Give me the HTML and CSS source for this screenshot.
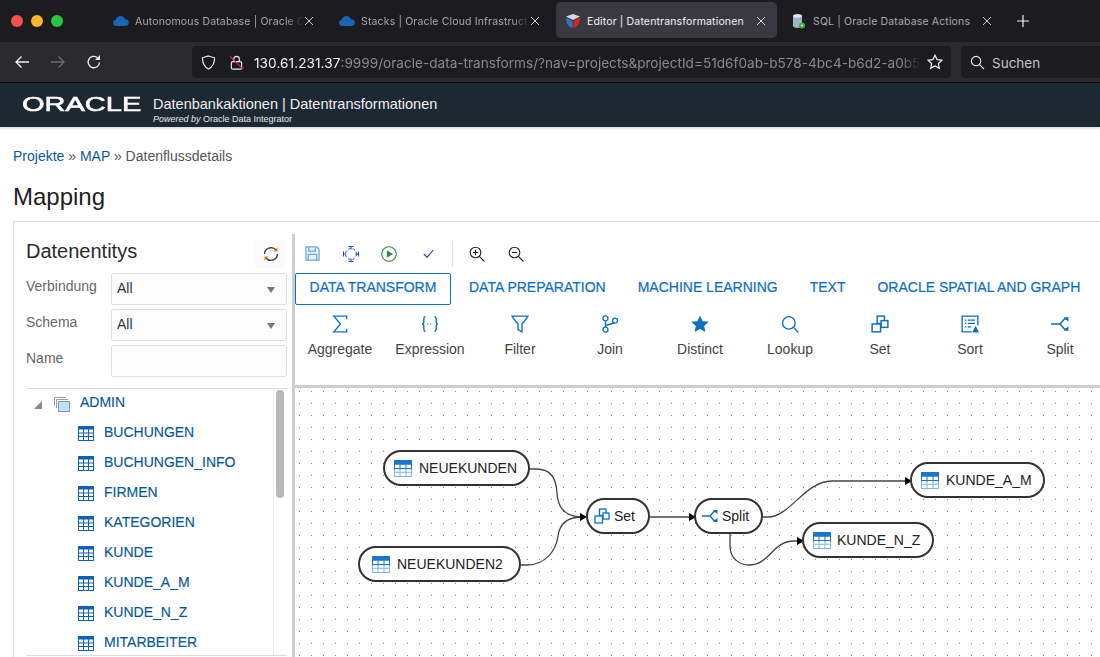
FILE: index.html
```html
<!DOCTYPE html>
<html lang="en">
<head>
  <meta charset="UTF-8">
  <meta name="viewport" content="width=device-width, initial-scale=1.0">
  <title>Editor | Datentransformationen</title>
  <link rel="stylesheet" href="styles.css">
</head>
<body>
  <svg class="defs" width="0" height="0">
    <defs>
      <symbol id="cloud" viewBox="0 0 16 10">
        <path d="M3.6 10C1.6 10 0 8.7 0 6.9 0 5.4 1.1 4.2 2.6 4 3.3 1.6 5.2 0 7.5 0c2.2 0 4 1.3 4.7 3.300C14.400 3.400 16 4.900 16 6.800 16 8.700 14.400 10 12.500 10z" fill="#1a65b5"/>
      </symbol>
      <symbol id="close" viewBox="0 0 10 10">
        <path d="M1 1L9 9M9 1L1 9" fill="none" stroke="#e6e6e8" stroke-width="0.900"/>
      </symbol>
      <symbol id="table" viewBox="0 0 16 15">
        <rect x="0.500" y="0.500" width="15" height="14" fill="#fff" stroke="#0d62b8"/>
        <rect x="0" y="0" width="16" height="3.500" fill="#0d62b8"/>
        <path d="M0.500 7H15.500M0.500 10.500H15.500M5.500 3V14.500M10.500 3V14.500" fill="none" stroke="#0d62b8"/>
      </symbol>
      <symbol id="table-soft" viewBox="0 0 18 16" preserveAspectRatio="none">
        <rect x="0" y="0" width="18" height="16" fill="#1a76cc"/>
        <rect x="0" y="9" width="18" height="7" fill="#7fb5e6"/>
        <path d="M1 4.500H5.500V7.500H1zM6.500 4.500H11.500V7.500H6.500zM12.500 4.500H17V7.500H12.500zM1 8.500H5.500V11H1zM6.500 8.500H11.500V11H6.500zM12.500 8.500H17V11H12.500zM1 12H5.500V15H1zM6.500 12H11.500V15H6.500zM12.500 12H17V15H12.500z" fill="#fff"/>
      </symbol>
      <symbol id="set" viewBox="0 0 16 16">
        <rect x="5.500" y="1" width="6.500" height="6.500" fill="#fff" stroke="#0b6fc4" stroke-width="1.300"/>
        <rect x="9" y="5" width="6" height="6" fill="#fff" stroke="#0b6fc4" stroke-width="1.300"/>
        <rect x="1" y="8" width="7.500" height="7" fill="#fff" stroke="#0b6fc4" stroke-width="1.300"/>
      </symbol>
      <symbol id="split" viewBox="0 0 16 14">
        <path d="M0 7H8M8 7L12 2.500H15M8 7L12 11.500H15" fill="none" stroke="#0b6fc4" stroke-width="1.400"/>
        <path d="M11 1H15.500V5zM11 13H15.500V9z" fill="#0b6fc4"/>
      </symbol>
    </defs>
  </svg>

  <!-- browser chrome -->
  <div class="tabstrip">
    <div class="traffic">
      <span class="light light-red"></span>
      <span class="light light-yellow"></span>
      <span class="light light-green"></span>
    </div>
    <div class="tabs">
      <div class="tab">
        <svg class="favicon" viewBox="0 0 16 16"><use href="#cloud" y="3" width="16" height="10"/></svg>
        <span class="tab-title">Autonomous Database | Oracle C</span>
        <svg class="tab-close"><use href="#close"/></svg>
      </div>
      <div class="tab">
        <svg class="favicon" viewBox="0 0 16 16"><use href="#cloud" y="3" width="16" height="10"/></svg>
        <span class="tab-title">Stacks | Oracle Cloud Infrastruct</span>
        <svg class="tab-close"><use href="#close"/></svg>
      </div>
      <div class="tab tab-active">
        <svg class="favicon" viewBox="0 0 16 16">
          <path d="M8 1L15 3.500 8 7 1 3.500z" fill="#d8d8d8"/>
          <path d="M1 4.500L7.500 8V15C4 14 1 11 1 4.500z" fill="#2c76c9"/>
          <path d="M15 4.500L8.500 8V15C12 14 15 11 15 4.500z" fill="#d9261c"/>
        </svg>
        <span class="tab-title">Editor | Datentransformationen</span>
        <svg class="tab-close"><use href="#close"/></svg>
      </div>
      <div class="tab">
        <svg class="favicon" viewBox="0 0 16 16">
          <path d="M2 3C2 0.500 11 0.500 11 3V13C11 15.500 2 15.500 2 13z" fill="#9db4cc"/>
          <ellipse cx="6.500" cy="3" rx="4.500" ry="1.800" fill="#dbe5ef"/>
          <circle cx="11" cy="12.500" r="3" fill="#3fae3a"/>
          <circle cx="11" cy="12.500" r="1" fill="#d5f5d0"/>
        </svg>
        <span class="tab-title">SQL | Oracle Database Actions</span>
        <svg class="tab-close"><use href="#close"/></svg>
      </div>
    </div>
    <svg class="new-tab" viewBox="0 0 12 12"><path d="M6 0V12M0 6H12" stroke="#f2f2f2" stroke-width="1.200"/></svg>
  </div>

  <div class="navbar">
    <svg class="nav-icon nav-back" viewBox="0 0 16 16"><path d="M15 8H2M7.500 2.500L2 8l5.500 5.500" fill="none" stroke="#f0f0f0" stroke-width="1.300"/></svg>
    <svg class="nav-icon nav-forward" viewBox="0 0 16 16"><path d="M1 8H14M8.500 2.500L14 8l-5.500 5.500" fill="none" stroke="#6c6c70" stroke-width="1.300"/></svg>
    <svg class="nav-icon nav-reload" viewBox="0 0 16 16"><path d="M13.500 8.500A5.700 5.700 0 1 1 11.500 3.700" fill="none" stroke="#f0f0f0" stroke-width="1.300"/><path d="M14 1V6H9z" fill="#f0f0f0"/></svg>
    <div class="urlbar">
      <svg class="url-icon" viewBox="0 0 16 16"><path d="M8 1L14.500 3C14.500 9 13 12.500 8 15 3 12.500 1.500 9 1.500 3z" fill="none" stroke="#f0f0f0" stroke-width="1.200"/></svg>
      <svg class="url-icon url-lock" viewBox="0 0 16 16">
        <rect x="2.500" y="7" width="11" height="8" rx="1.500" fill="none" stroke="#f0f0f0" stroke-width="1.200"/>
        <path d="M5 7V4.500a3 3 0 0 1 6 0V7" fill="none" stroke="#f0f0f0" stroke-width="1.200"/>
        <path d="M1 1.500L15 15" stroke="#e22850" stroke-width="1.200"/>
      </svg>
      <span class="url-text"><span class="url-host">130.61.231.37</span>:9999/oracle-data-transforms/?nav=projects&amp;projectId=51d6f0ab-b578-4bc4-b6d2-a0b5</span>
      <svg class="url-star" viewBox="0 0 16 16"><path d="M8 1.200l2.100 4.400 4.800.6-3.500 3.300.9 4.800L8 12l-4.300 2.300.9-4.800L1.100 6.200l4.800-.6z" fill="none" stroke="#f0f0f0" stroke-width="1.200"/></svg>
    </div>
    <div class="searchbar">
      <svg class="url-icon" viewBox="0 0 16 16"><circle cx="6.500" cy="6.500" r="5" fill="none" stroke="#f0f0f0" stroke-width="1.200"/><path d="M10.200 10.200L15 15" stroke="#f0f0f0" stroke-width="1.200"/></svg>
      <span class="search-text">Suchen</span>
    </div>
  </div>

  <!-- app header -->
  <header class="app-header">
    <div class="brand-logo"><span class="brand-word">ORACLE</span></div>
    <div class="brand-text">
      <div class="brand-title">Datenbankaktionen | Datentransformationen</div>
      <div class="brand-sub"><em>Powered by</em> Oracle Data Integrator</div>
    </div>
  </header>

  <main class="page">
    <div class="breadcrumb">
      <a>Projekte</a> <span class="sep">&raquo;</span> <a>MAP</a> <span class="sep">&raquo;</span> Datenflussdetails
    </div>
    <h1>Mapping</h1>

    <div class="workspace">
      <aside class="entities">
        <div class="entities-head">
          <h2>Datenentitys</h2>
          <button class="refresh-btn">
            <svg viewBox="0 0 16 16" width="16" height="16">
              <path d="M1.500 8A6.500 6.500 0 0 1 13 4" fill="none" stroke="#333" stroke-width="1.300"/>
              <path d="M14.500 8A6.500 6.500 0 0 1 3 12" fill="none" stroke="#333" stroke-width="1.300"/>
              <path d="M14.500 1.500V5.500H10.500z" fill="#d9791a"/>
              <path d="M1.500 14.500V10.500H5.500z" fill="#d9791a"/>
            </svg>
          </button>
        </div>
        <div class="field">
          <label>Verbindung</label>
          <div class="select">All<span class="caret"></span></div>
        </div>
        <div class="field">
          <label>Schema</label>
          <div class="select">All<span class="caret"></span></div>
        </div>
        <div class="field">
          <label>Name</label>
          <div class="select"></div>
        </div>
        <div class="tree">
          <div class="tree-list">
            <div class="tree-row tree-root">
              <span class="tree-toggle"></span>
              <svg class="folder-icon" viewBox="0 0 16 15">
                <path d="M0.500 9V0.500H12M2.500 11V2.500H14" fill="none" stroke="#8fa3ad"/>
                <rect x="4.500" y="4.500" width="11" height="10" fill="#bfe3f5" stroke="#7f98a6"/>
              </svg>
              <span>ADMIN</span>
            </div>
            <div class="tree-row"><svg class="table-icon"><use href="#table"/></svg><span>BUCHUNGEN</span></div>
            <div class="tree-row"><svg class="table-icon"><use href="#table"/></svg><span>BUCHUNGEN_INFO</span></div>
            <div class="tree-row"><svg class="table-icon"><use href="#table"/></svg><span>FIRMEN</span></div>
            <div class="tree-row"><svg class="table-icon"><use href="#table"/></svg><span>KATEGORIEN</span></div>
            <div class="tree-row"><svg class="table-icon"><use href="#table"/></svg><span>KUNDE</span></div>
            <div class="tree-row"><svg class="table-icon"><use href="#table"/></svg><span>KUNDE_A_M</span></div>
            <div class="tree-row"><svg class="table-icon"><use href="#table"/></svg><span>KUNDE_N_Z</span></div>
            <div class="tree-row"><svg class="table-icon"><use href="#table"/></svg><span>MITARBEITER</span></div>
          </div>
          <div class="tree-scroll"><div class="tree-thumb"></div></div>
        </div>
      </aside>

      <section class="editor">
        <div class="editor-tools">
          <svg class="tool" viewBox="0 0 16 16">
            <path d="M1 1H12.500L15 3.500V15H1z" fill="#eaf3fb" stroke="#6aa6da" stroke-width="1.300"/>
            <path d="M4 1.500V5.500H11V1.500M3.500 15V9H12.500V15" fill="none" stroke="#6aa6da" stroke-width="1.300"/>
          </svg>
          <svg class="tool tool-fit" viewBox="0 0 16 16">
            <circle cx="8" cy="8" r="5.500" fill="none" stroke="#1a3fe0" stroke-dasharray="2.500 2"/>
            <path d="M5.500 0.500H10.500M8 0.500V3.500M5.500 15.500H10.500M8 15.500V12.500M0.500 5.500V10.500M0.500 8H3.500M15.500 5.500V10.500M15.500 8H12.500" fill="none" stroke="#1a3fe0"/>
          </svg>
          <svg class="tool tool-run" viewBox="0 0 16 16">
            <circle cx="8" cy="8" r="7.300" fill="none" stroke="#2c8a3e" stroke-width="1.100"/>
            <path d="M5.800 4.200L12 8 5.800 11.800z" fill="#2c8a3e"/>
          </svg>
          <svg class="tool tool-check" viewBox="0 0 16 16"><path d="M3 8.500L6.500 12 13 4.500" fill="none" stroke="#4c4aa8" stroke-width="1.300"/></svg>
          <span class="tool-sep"></span>
          <svg class="tool tool-zoomin" viewBox="0 0 16 16">
            <circle cx="6.500" cy="6.500" r="5.300" fill="none" stroke="#222" stroke-width="1.100"/>
            <path d="M10.300 10.300L15.500 15.500M3.800 6.500H9.200M6.500 3.800V9.200" fill="none" stroke="#222" stroke-width="1.100"/>
          </svg>
          <svg class="tool tool-zoomout" viewBox="0 0 16 16">
            <circle cx="6.500" cy="6.500" r="5.300" fill="none" stroke="#222" stroke-width="1.100"/>
            <path d="M10.300 10.300L15.500 15.500M3.800 6.500H9.200" fill="none" stroke="#222" stroke-width="1.100"/>
          </svg>
        </div>

        <div class="category-tabs">
          <a class="cat-tab cat-active">DATA TRANSFORM</a>
          <a class="cat-tab">DATA PREPARATION</a>
          <a class="cat-tab">MACHINE LEARNING</a>
          <a class="cat-tab">TEXT</a>
          <a class="cat-tab">ORACLE SPATIAL AND GRAPH</a>
        </div>

        <div class="palette">
          <div class="palette-item">
            <svg viewBox="0 0 16 16"><path d="M14 3.500V1H2.500L8.500 8 2.500 15H14V12.500" fill="none" stroke="#0b6fc4" stroke-width="1.200"/></svg>
            <span>Aggregate</span>
          </div>
          <div class="palette-item">
            <svg viewBox="0 0 16 16">
              <path d="M4 1.500C2.500 1.500 2.500 2.500 2.500 4V6.500C2.500 7.500 2 8 1 8 2 8 2.500 8.500 2.500 9.500V12C2.500 13.500 2.500 14.500 4 14.500M12 1.500C13.500 1.500 13.500 2.500 13.500 4V6.500C13.500 7.500 14 8 15 8 14 8 13.500 8.500 13.500 9.500V12C13.500 13.500 13.500 14.500 12 14.500" fill="none" stroke="#0b6fc4" stroke-width="1.200"/>
              <path d="M5.500 8H10.500" stroke="#0b6fc4" stroke-width="1.100" stroke-dasharray="1.200 1.200"/>
            </svg>
            <span>Expression</span>
          </div>
          <div class="palette-item">
            <svg viewBox="0 0 16 16"><path d="M0.800 1H15.200L9.800 8V15L6.200 13V8z" fill="none" stroke="#0b6fc4" stroke-width="1.200"/></svg>
            <span>Filter</span>
          </div>
          <div class="palette-item">
            <svg viewBox="0 0 16 16">
              <circle cx="4" cy="3" r="2.200" fill="none" stroke="#0b6fc4" stroke-width="1.200"/>
              <circle cx="4" cy="13" r="2.200" fill="none" stroke="#0b6fc4" stroke-width="1.200"/>
              <circle cx="12.500" cy="5" r="2.200" fill="none" stroke="#0b6fc4" stroke-width="1.200"/>
              <path d="M4 5.200V10.800M4 10C4 8 10 9 11 6.800" fill="none" stroke="#0b6fc4" stroke-width="1.200"/>
            </svg>
            <span>Join</span>
          </div>
          <div class="palette-item">
            <svg viewBox="0 0 16 16"><path d="M8 0.500l2.300 5 5.400.6-4 3.700 1.100 5.400L8 12.500 3.200 15.200l1.100-5.400-4-3.700 5.400-.6z" fill="#0b6fc4"/></svg>
            <span>Distinct</span>
          </div>
          <div class="palette-item">
            <svg viewBox="0 0 16 16"><circle cx="7" cy="7" r="5.600" fill="none" stroke="#0b6fc4" stroke-width="1.200"/><path d="M11 11L15.500 15.500" stroke="#0b6fc4" stroke-width="1.200"/></svg>
            <span>Lookup</span>
          </div>
          <div class="palette-item">
            <svg viewBox="0 0 16 16"><use href="#set" width="16" height="16"/></svg>
            <span>Set</span>
          </div>
          <div class="palette-item">
            <svg viewBox="0 0 16 16">
              <path d="M9.500 15H1V1H15V9" fill="none" stroke="#0b6fc4" stroke-width="1.200"/>
              <path d="M3.500 4.500H4.800M6 4.500H12.500M3.500 7.500H4.800M6 7.500H12.500M3.500 10.500H4.800M6 10.500H9" fill="none" stroke="#0b6fc4" stroke-width="1.100"/>
              <path d="M13 9.500L16 15.500H10z" fill="#0b6fc4"/>
            </svg>
            <span>Sort</span>
          </div>
          <div class="palette-item">
            <svg viewBox="0 0 16 16"><use href="#split" y="1" width="16" height="14"/></svg>
            <span>Split</span>
          </div>
        </div>

        <div class="canvas">
          <svg class="edges" viewBox="295 387 805 270" width="805" height="270">
            <g fill="none" stroke="#444" stroke-width="1.300">
              <path d="M529 468H536C552 468 556 478 557 492 558 510 568 516 582 516"/>
              <path d="M521 564H527C545 564 556 550 558 535 560 520 570 516 582 516"/>
              <path d="M650 516H690"/>
              <path d="M763 516H768C790 516 805 480 832 480H906"/>
              <path d="M730 533V545C730 558 740 564 749 564 770 564 772 540 794 540H798"/>
            </g>
            <g fill="#000">
              <path d="M580 512L587 516 580 520z"/>
              <path d="M689 512L696 516 689 520z"/>
              <path d="M905 476L912 480 905 484z"/>
              <path d="M797 536L804 540 797 544z"/>
            </g>
          </svg>
          <div class="node node-neuekunden"><svg class="node-icon"><use href="#table-soft"/></svg>NEUEKUNDEN</div>
          <div class="node node-neuekunden2"><svg class="node-icon"><use href="#table-soft"/></svg>NEUEKUNDEN2</div>
          <div class="node node-set"><svg class="node-glyph" viewBox="0 0 16 16"><use href="#set" width="16" height="16"/></svg>Set</div>
          <div class="node node-split"><svg class="node-glyph" viewBox="0 0 16 16"><use href="#split" y="1" width="16" height="14"/></svg>Split</div>
          <div class="node node-kunde-am"><svg class="node-icon"><use href="#table-soft"/></svg>KUNDE_A_M</div>
          <div class="node node-kunde-nz"><svg class="node-icon"><use href="#table-soft"/></svg>KUNDE_N_Z</div>
        </div>
      </section>
    </div>
  </main>
</body>
</html>
```

FILE: styles.css
```css
html, body {
  margin: 0;
  padding: 0;
  height: 657px;
  overflow: hidden;
}

body {
  font-family: "Liberation Sans", Arial, sans-serif;
  background-color: #fff;
  color: #333;
  display: flex;
  flex-direction: column;
}

.defs {
  position: absolute;
}

/* Browser tab strip */
.tabstrip {
  height: 42px;
  flex: none;
  background-color: #1c1b20;
  display: flex;
  align-items: flex-start;
  font-family: Inter, "Noto Sans", sans-serif;
}

.traffic {
  width: 104px;
  height: 42px;
  box-sizing: border-box;
  padding: 15px 0 0 11px;
  display: flex;
  gap: 8px;
  flex: none;
}

.light {
  width: 12px;
  height: 12px;
  border-radius: 50%;
}

.light-red { background-color: #f5524b; }
.light-yellow { background-color: #f9b52e; }
.light-green { background-color: #2bc340; }

.tabs {
  display: flex;
  gap: 5px;
  padding-top: 2px;
}

.tab {
  width: 221px;
  height: 36px;
  box-sizing: border-box;
  padding: 2px 11px 0 9px;
  border-radius: 5px;
  display: flex;
  align-items: center;
  color: #a9a9ad;
  font-size: 10.500px;
  letter-spacing: 0.150px;
}

.tab-active {
  background-color: #3a3941;
  color: #f1f1f3;
}

.favicon {
  width: 16px;
  height: 16px;
  flex: none;
  margin-right: 6px;
}

.tab-title {
  flex: 1;
  white-space: nowrap;
  overflow: hidden;
  -webkit-mask-image: linear-gradient(to left, transparent 0, #000 18px);
  mask-image: linear-gradient(to left, transparent 0, #000 18px);
}

.tab-active .tab-title,
.tab:last-child .tab-title {
  -webkit-mask-image: none;
  mask-image: none;
}

.tab-close {
  width: 10px;
  height: 10px;
  flex: none;
}

.new-tab {
  width: 12px;
  height: 12px;
  margin: 15px 0 0 14px;
}

/* Browser navigation bar */
.navbar {
  height: 40px;
  flex: none;
  background-color: #2a2a2f;
  border-bottom: 1px solid #0c0c0d;
  display: flex;
  align-items: center;
  font-family: Inter, "Noto Sans", sans-serif;
}

.nav-icon {
  width: 16px;
  height: 16px;
  flex: none;
}

.nav-back { margin-left: 14px; }
.nav-forward { margin-left: 20px; }
.nav-reload { margin-left: 20px; }

.urlbar {
  width: 759px;
  height: 32px;
  box-sizing: border-box;
  margin-left: 90px;
  background-color: #1c1b20;
  border-radius: 4px;
  display: flex;
  align-items: center;
  padding: 0 8px 0 9px;
  font-size: 13.600px;
  color: #8b8b8f;
}

.url-icon {
  width: 15px;
  height: 15px;
  flex: none;
}

.url-lock {
  margin-left: 13px;
  margin-right: 10px;
}

.url-text {
  flex: 1;
  white-space: nowrap;
  overflow: hidden;
  padding-top: 2px;
  -webkit-mask-image: linear-gradient(to left, transparent 0, #000 20px);
  mask-image: linear-gradient(to left, transparent 0, #000 20px);
}

.url-host {
  color: #f4f4f5;
  letter-spacing: 0.080px;
}

.url-star {
  width: 16px;
  height: 16px;
  flex: none;
  margin-left: 6px;
}

.searchbar {
  flex: 1;
  height: 32px;
  margin-left: 10px;
  background-color: #1c1b20;
  border-radius: 4px 0 0 4px;
  display: flex;
  align-items: center;
  gap: 7px;
  padding-left: 9px;
  font-size: 13.500px;
  color: #c4c4c6;
}

.search-text {
  padding-top: 2px;
}

/* Application header */
.app-header {
  height: 44px;
  flex: none;
  background-color: #1c2832;
  color: #fff;
  display: flex;
  box-shadow: 0 1px 3px rgba(0, 0, 0, 0.2);
  position: relative;
}

.brand-logo {
  width: 131px;
  padding-left: 22px;
  flex: none;
}

.brand-word {
  display: inline-block;
  font-size: 20px;
  line-height: 42px;
  font-weight: 400;
  -webkit-text-stroke: 0.600px #fff;
  transform: scaleX(1.450);
  transform-origin: left center;
}

.brand-title {
  font-size: 14.500px;
  line-height: 16px;
  margin-top: 13px;
  color: #eef0f2;
}

.brand-sub {
  font-size: 9px;
  line-height: 10px;
  margin-top: 2px;
  color: #e6e8ea;
}

/* Page content */
.page {
  flex: 1;
  min-height: 0;
  display: flex;
  flex-direction: column;
  padding-left: 13px;
}

.breadcrumb {
  font-size: 14px;
  color: #555;
  margin-top: 21px;
  line-height: 16px;
}

.breadcrumb a {
  color: #07599c;
}

.breadcrumb .sep {
  color: #555;
}

h1 {
  font-size: 24px;
  font-weight: 400;
  color: #222;
  line-height: 28px;
  margin: 19px 0 10px;
}

.workspace {
  flex: 1;
  min-height: 0;
  border-top: 1px solid #dcdcdc;
  border-left: 1px solid #dcdcdc;
  display: flex;
}

/* Left panel with data entities */
.entities {
  width: 273px;
  flex: none;
  box-sizing: border-box;
  padding: 13px 0 0 12px;
  display: flex;
  flex-direction: column;
}

.entities-head {
  display: flex;
  justify-content: space-between;
  align-items: center;
  height: 32px;
  margin: 0 0 6px;
}

h2 {
  margin: 0;
  font-size: 20px;
  font-weight: 400;
  color: #2b2b2b;
}

.refresh-btn {
  width: 31px;
  height: 28px;
  padding: 0;
  margin: 5px 1px 0 0;
  border: none;
  background-color: #fbfbfb;
  align-self: flex-start;
  display: flex;
  align-items: center;
  justify-content: center;
}

.field {
  display: flex;
  height: 32px;
  margin-bottom: 4px;
}

.field label {
  width: 85px;
  flex: none;
  font-size: 14px;
  line-height: 26px;
  color: #666;
}

.select {
  flex: 1;
  box-sizing: border-box;
  border: 1px solid #dfdfdf;
  border-radius: 2px;
  background-color: #fcfcfd;
  font-size: 14px;
  line-height: 28px;
  padding-left: 5px;
  color: #333;
  position: relative;
}

.caret {
  position: absolute;
  right: 11px;
  top: 13px;
  border-left: 4.500px solid transparent;
  border-right: 4.500px solid transparent;
  border-top: 6px solid #777;
}

.tree {
  flex: 1;
  min-height: 0;
  margin-top: 7px;
  border-top: 1px solid #dcdcdc;
  border-bottom: 1px solid #dcdcdc;
  margin-bottom: 1px;
  display: flex;
  overflow: hidden;
}

.tree-list {
  flex: 1;
  overflow: hidden;
}

.tree-row {
  height: 30px;
  display: flex;
  align-items: center;
  padding-left: 52px;
  gap: 10px;
  font-size: 14px;
  color: #05589a;
  -webkit-text-stroke: 0.150px #05589a;
}

.tree-root {
  box-sizing: border-box;
  padding-left: 8px;
  padding-bottom: 2px;
  height: 28px;
  gap: 0;
}

.tree-toggle {
  width: 0;
  height: 0;
  border-bottom: 8px solid #8a8a8a;
  border-left: 8px solid transparent;
  margin-right: 12px;
  margin-top: 5px;
}

.folder-icon {
  width: 16px;
  height: 15px;
  margin-right: 10px;
  margin-top: 5px;
}

.table-icon {
  width: 16px;
  height: 15px;
  flex: none;
  margin-top: 2px;
}

.tree-scroll {
  width: 14px;
  flex: none;
  border-left: 1px solid #ececec;
  box-sizing: border-box;
  padding: 1px 3px 0 2px;
}

.tree-thumb {
  height: 108px;
  background-color: #b8b8b8;
  border-radius: 4px;
}

/* Right panel with the editor */
.editor {
  flex: 1;
  min-width: 0;
  margin-top: 12px;
  margin-left: 5px;
  border-left: 3px solid #cfcfcf;
  display: flex;
  flex-direction: column;
}

.editor-tools {
  height: 39px;
  flex: none;
  display: flex;
  align-items: center;
  padding-left: 10px;
}

.tool {
  width: 15px;
  height: 15px;
  flex: none;
}

.tool-fit { margin-left: 23px; width: 16px; height: 16px; }
.tool-run { margin-left: 22px; width: 16px; height: 16px; }
.tool-check { margin-left: 24px; }

.tool-sep {
  width: 1px;
  height: 26px;
  background-color: #ddd;
  margin-left: 16px;
}

.tool-zoomin { margin-left: 16px; width: 16px; height: 16px; }
.tool-zoomout { margin-left: 23px; width: 16px; height: 16px; }

.category-tabs {
  display: flex;
  align-items: flex-start;
  height: 32px;
  flex: none;
}

.cat-tab {
  flex: none;
  font-size: 14px;
  color: #0b6fc4;
  -webkit-text-stroke: 0.200px #0b6fc4;
  line-height: 28px;
  margin-right: 32px;
  white-space: nowrap;
}

.cat-active {
  box-sizing: border-box;
  width: 156px;
  height: 32px;
  border: 1px solid #0b6fc4;
  border-radius: 2px;
  text-align: center;
  line-height: 26px;
  margin-right: 18px;
}

.palette {
  height: 80px;
  flex: none;
  display: flex;
  padding-top: 10px;
  box-sizing: border-box;
}

.palette-item {
  width: 90px;
  flex: none;
  display: flex;
  flex-direction: column;
  align-items: center;
  font-size: 14px;
  color: #444;
}

.palette-item svg {
  width: 18px;
  height: 18px;
  margin-bottom: 8px;
}

.canvas {
  flex: 1;
  min-height: 0;
  position: relative;
  border-top: 3px solid #cfcfcf;
  background-image: radial-gradient(circle at 4.500px 3.500px, #8c8c8c 0.700px, transparent 1px);
  background-size: 12px 12px;
}

.edges {
  position: absolute;
  left: 0;
  top: 0;
}

.node {
  position: absolute;
  box-sizing: border-box;
  height: 36px;
  background-color: #fff;
  border: 2px solid #333;
  border-radius: 18px;
  display: flex;
  align-items: center;
  font-size: 14px;
  color: #222;
  white-space: nowrap;
}

.node-icon {
  width: 18px;
  height: 17px;
  flex: none;
  margin: 0 7px 0 9px;
}

.node-glyph {
  width: 16px;
  height: 16px;
  flex: none;
  margin: 0 4px 0 6px;
}

.node-neuekunden { left: 88px; top: 62px; width: 147px; }
.node-neuekunden2 { left: 63px; top: 158px; width: 163px; }
.node-neuekunden2 .node-icon { margin-left: 12px; }
.node-set { left: 291px; top: 110px; width: 64px; }
.node-split { left: 399px; top: 110px; width: 69px; }
.node-kunde-am { left: 615px; top: 74px; width: 135px; }
.node-kunde-nz { left: 507px; top: 134px; width: 132px; }
.node-kunde-nz .node-icon { margin-right: 6px; }
```
